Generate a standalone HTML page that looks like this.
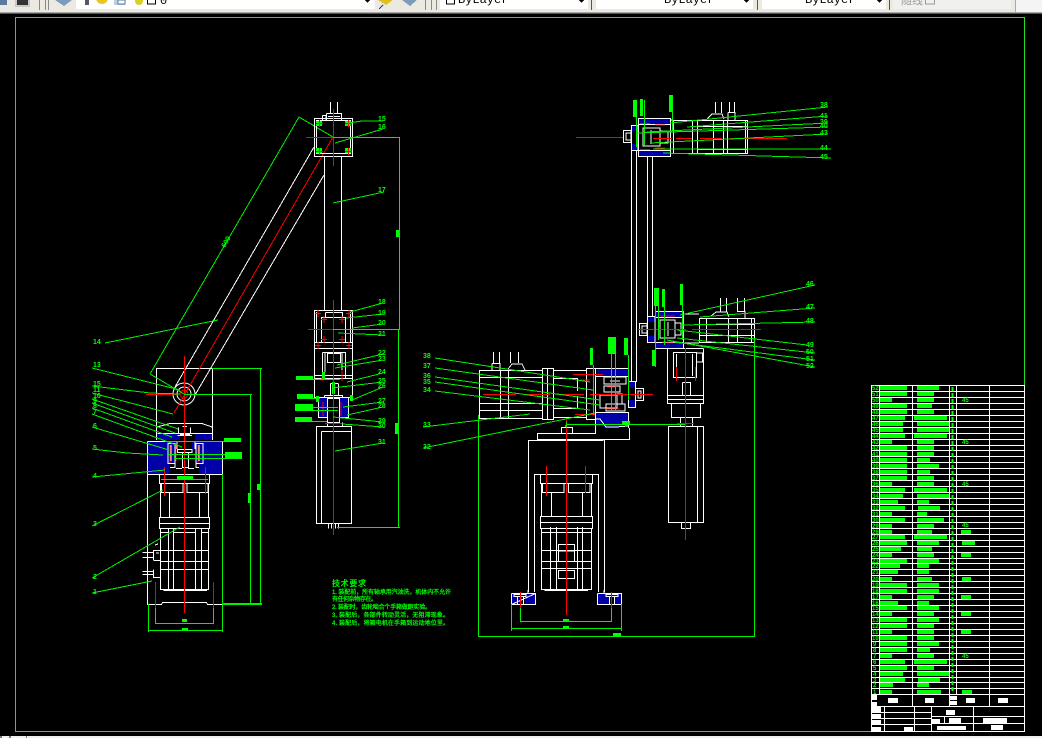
<!DOCTYPE html>
<html lang="zh">
<head>
<meta charset="utf-8">
<title>CAD</title>
<style>
html,body{margin:0;padding:0;background:#000;width:1042px;height:738px;overflow:hidden}
svg{position:absolute;left:0;top:0;display:block}
.w{fill:none;stroke:#fff;stroke-width:1}
.g{fill:none;stroke:#00f000;stroke-width:1}
.r{fill:none;stroke:#ff0000;stroke-width:1}
.b{fill:#00ff00;stroke:none}
.l{fill:#00ff00;font:bold 7px "Liberation Sans",sans-serif}
.n{fill:#00ff00;font:bold 6px "Liberation Sans",sans-serif}
.c{fill:#00ff00;stroke:#00ff00;stroke-width:.25;font-family:"Liberation Sans","Noto Sans CJK SC",sans-serif;font-size:6px}
.m{font:12px "Liberation Mono",monospace;fill:#000}
</style>
</head>
<body>
<svg width="1042" height="738" viewBox="0 0 1042 738" shape-rendering="crispEdges" xmlns="http://www.w3.org/2000/svg">
<rect width="1042" height="738" fill="#000"/>
<!-- toolbar -->
<rect width="1042" height="12" fill="#ece9e0"/>
<rect y="12" width="1042" height="1" fill="#a8a8a8"/>
<rect y="13" width="1042" height="1" fill="#555"/>
<rect x="0" y="0" width="7" height="5" fill="#5a7aa0"/>
<rect x="15" y="0" width="15" height="7" fill="#c8c8c8"/><rect x="17" y="0" width="11" height="5" fill="#333"/>
<rect x="39" y="0" width="1" height="10" fill="#888"/><rect x="45" y="0" width="1" height="10" fill="#888"/><rect x="48" y="0" width="1" height="10" fill="#888"/>
<path d="M55 0H72L64 6Z" fill="#7d9cbd"/>
<rect x="76" y="0" width="299" height="9" fill="#fff"/>
<rect x="85" y="0" width="4" height="5" fill="#556"/>
<circle cx="102" cy="-2" r="6" fill="#e8c820" shape-rendering="auto"/>
<rect x="114" y="0" width="11" height="5" fill="#b8d0e8"/><rect x="118" y="0" width="7" height="4" fill="#fff" stroke="#5a7aa0"/>
<circle cx="139" cy="1" r="4" fill="#d8d020" shape-rendering="auto"/>
<rect x="147.500" y="-2" width="8" height="6" fill="#fff" stroke="#000"/>
<text x="160" y="4" class="m">0</text>
<path d="M365 0H370L367.500 3Z" fill="#000"/>
<path d="M378 0H393L386 5Z" fill="#e0c020"/><path d="M379 9L383 5" stroke="#1840a0" fill="none"/>
<path d="M402 0H417L410 6Z" fill="#7d9cbd"/>
<rect x="425" y="0" width="1" height="10" fill="#888"/><rect x="431" y="0" width="1" height="10" fill="#888"/><rect x="436" y="0" width="1" height="10" fill="#888"/>
<rect x="440" y="0" width="148" height="9" fill="#fff"/>
<rect x="446.500" y="-2" width="8" height="6" fill="#fff" stroke="#000"/>
<text x="458" y="3" class="m">ByLayer</text>
<path d="M579 0H584L581.500 3Z" fill="#000"/>
<rect x="591" y="0" width="1" height="10" fill="#555"/>
<rect x="596" y="0" width="157" height="9" fill="#fff"/>
<text x="664" y="3" class="m">ByLayer</text>
<path d="M744 0H749L746.500 3Z" fill="#000"/>
<rect x="757" y="0" width="1" height="10" fill="#555"/>
<rect x="762" y="0" width="124" height="9" fill="#fff"/>
<text x="805" y="3" class="m">ByLayer</text>
<path d="M877 0H882L879.500 3Z" fill="#000"/>
<rect x="889" y="0" width="1" height="10" fill="#555"/>
<rect x="893" y="0" width="118" height="9" fill="#f0f0f0"/>
<text x="901" y="4" font-size="11" fill="#999" font-family="'Liberation Sans','Noto Sans CJK SC',sans-serif">随线</text>
<rect x="925.500" y="-2" width="9" height="6" fill="none" stroke="#999"/>
<rect x="1015" y="0" width="1" height="12" fill="#a8a8a8"/>
<rect x="1016" y="0" width="26" height="12" fill="#f4f4f4"/>
<!-- bottom strip -->
<rect x="0" y="736" width="1042" height="2" fill="#f0f0f0"/>
<rect x="0" y="736" width="2" height="2" fill="#777"/><rect x="9" y="736" width="2" height="2" fill="#777"/><rect x="26" y="736" width="1" height="2" fill="#777"/>
<!-- frame -->
<path d="M15.500 17.500H1024.500V731.500H15.500Z" fill="none" stroke="#20e020"/>

<!-- ================ hatching ================ -->
<g fill="#0000a8">
<rect x="147" y="441" width="22" height="33"/><rect x="169" y="441" width="8" height="8"/>
<rect x="199" y="441" width="23" height="33"/><rect x="192" y="441" width="8" height="8"/>
<rect x="157" y="433" width="23" height="7"/><rect x="195" y="433" width="17" height="7"/>
<rect x="168" y="443" width="8" height="21"/><rect x="196" y="443" width="8" height="21"/>
<rect x="318" y="397" width="9" height="20"/><rect x="339" y="397" width="9" height="20"/>
<rect x="638" y="118" width="32" height="6"/><rect x="638" y="150" width="32" height="6"/>
<rect x="631" y="125" width="7" height="6"/><rect x="631" y="144" width="7" height="6"/>
<rect x="655" y="311" width="28" height="6"/><rect x="655" y="343" width="28" height="5"/>
<rect x="647" y="316" width="8" height="6"/><rect x="647" y="336" width="8" height="6"/>
<rect x="597" y="369" width="31" height="7"/>
<path d="M596 412H628V426L616 428H606L596 423Z"/>
<rect x="628" y="381" width="7" height="7"/><rect x="628" y="400" width="7" height="7"/>
<rect x="512" y="594" width="10" height="10"/><rect x="525" y="594" width="10" height="10"/>
<rect x="598" y="594" width="12" height="10"/><rect x="614" y="594" width="7" height="10"/>
</g>

<!-- ================ LEFT VIEW white ================ -->
<g class="w">
<path d="M156.500 440V368.500H212.500V440"/>
<path d="M157 427L170 423.500H202L212 427"/>
<path d="M147.500 441.500V604.500H161.500L162.500 602.500H206.500L207.500 604.500H222.500V441.500H195V449M147.500 441.500H177V449"/>
<path d="M147.500 474.500H222.500"/>
<path d="M157.500 433.500H212.500"/>
<path d="M159.500 474.500V483.500H209.500V474.500"/>
<path d="M160.500 483.500V517.500M208.500 483.500V517.500"/>
<path d="M161.500 483.500V492.500H183V483.500M187 483.500V492.500H208V483.500"/>
<path d="M169.500 492.500V517.500M199.500 492.500V517.500"/>
<path d="M159.500 517.500H209.500V528.500H159.500ZM159.500 523.500H209.500"/>
<path d="M160.500 528.500V589.500H208.500V528.500"/>
<path d="M168.500 528.500V589.500M173.500 528.500V589.500M195.500 528.500V589.500M201.500 528.500V589.500"/>
<path d="M160.500 550.500H208.500M160.500 561.500H208.500M160.500 569.500H208.500M160.500 532.500H168M173 532.500H195M201 532.500H208"/>
<path d="M163.500 590.500H207"/>
<path d="M142.500 552.500H153.500M142.500 557.500H153.500M153.500 550.500H160M153.500 560.500H160M153.500 550V560M155 545L158 544M156 553H159"/>
<path d="M142.500 571.500H153.500M142.500 574.500H153.500M153.500 569.500V577.500H160"/>
<path d="M178.500 427.500V434M190.500 427.500V434M182.500 426.500H187M180 434.500H190"/>
<path d="M177.500 435.500H192"/>
<path d="M168 443.500H175V463.500H168ZM171 445V461"/>
<path d="M196 443.500H203V463.500H196ZM199 445V461"/>
<path d="M177.500 449.500H192V452.500H177.500Z"/>
<path d="M182.500 452.500V467.500H188.500V452.500M175 463.500V467.500H172M196 463.500V467.500H199"/>
<path d="M170 467.500H174M176 468.500H182M188 468.500H194"/>
<circle cx="184" cy="394" r="11" shape-rendering="auto"/>
<circle cx="184" cy="394" r="7" shape-rendering="auto"/>
<path d="M175 387L314 147M195 395L324 175"/>
</g>
<!-- left view red -->
<g class="r">
<path d="M184.500 356V613M146 394.500H177M155.500 582V608M213.500 582V608M164.500 467V496M205.500 467V494M174 413L333 137"/>
<path d="M170 445V463M198 445V463M176 444V461" />
</g>
<circle cx="184" cy="394" r="4" fill="none" stroke="#f00" shape-rendering="auto"/>
<!-- left view green -->
<g class="g">
<path d="M212 368.500H262M260.500 368V604M222 604.500H262M222 603.500H262"/>
<path d="M184 394.500H252M250.500 394V604"/>
<path d="M222.500 474V632M148.500 604V632M148 630.500H222"/>
<path d="M155.500 608V624M213.500 608V624M155 623.500H214"/>
<path d="M105 343L218 320M150 374L299 117L333 137M150 374L184 394"/>
<path d="M92 368L180 390M92 386L150 393L180 394M92 393L173 414M92 399L178 429M92 403L175 433M92 408L172 437M92 414L182 447M92 427L169 450M92 449L127 453L163 455M92 477L165 470M92 526L163 490M92 578L180 527M92 593L152 581"/>
<path d="M165 441.500H240M167 454.500H242M174 458.500H242M161 479.500H208"/>
</g>
<g class="b">
<rect x="224" y="438" width="17" height="4"/><rect x="225" y="452" width="17" height="6"/><rect x="177" y="476" width="16" height="3"/>
<rect x="182" y="619" width="5" height="3"/><rect x="182" y="628" width="6" height="2"/>
<rect x="248" y="493" width="3" height="10"/><rect x="257" y="484" width="3" height="6"/>
</g>
<text class="l" transform="translate(225,248) rotate(-60)" font-size="6">600</text>
<g class="l">
<text x="93" y="344">14</text><text x="93" y="367">13</text><text x="93" y="386">15</text><text x="93" y="392">11</text><text x="93" y="398">10</text><text x="93" y="403">9</text><text x="93" y="408">8</text><text x="93" y="414">7</text><text x="93" y="428">6</text><text x="93" y="450">5</text><text x="93" y="478">4</text><text x="93" y="526">3</text><text x="93" y="579">2</text><text x="93" y="594">1</text>
</g>

<!-- ================ MIDDLE VIEW ================ -->
<g class="w">
<path d="M314.500 118.500H352.500V156.500H314.500ZM316.500 120.500H350.500V153.500H316.500Z"/>
<path d="M324.500 156V310M341.500 156V310"/>
<path d="M326.500 113.500H341.500V120M326.500 113.500V120M328 116.500H340"/>
<path d="M330.500 102V113M337.500 102V113M322.500 115.500H326V120M322.500 115.500V120"/>
<path d="M314.500 310.500H352.500V397.500H314.500Z"/>
<path d="M316.500 312V342M350.500 312V342"/>
<path d="M321.500 317.500H345.500V342.500H321.500Z"/>
<path d="M325.500 312.500H342.500V317M325.500 312.500V317"/>
<path d="M314.500 342.500H352.500M314.500 348.500H352.500"/>
<path d="M322.500 352.500H345.500V378M322.500 352.500V378M327.500 353.500H340.500V362.500H327.500Z"/>
<path d="M314.500 375.500H352.500M314.500 378.500H352.500M325 352.500V372M342 352.500V372"/>
<path d="M330.500 383.500V395M338.500 383.500V395M330.500 383.500H338"/>
<path d="M324.500 395.500H342.500V398M324.500 395.500V398"/>
<path d="M318.500 397.500V417.500H327.500V397.500M348.500 397.500V417.500H339.500V397.500"/>
<path d="M327.500 398.500H339.500M327.500 417.500V422.500H339.500V417.500"/>
<path d="M327.500 422.500V426M342.500 422.500V426"/>
<path d="M316.500 426.500H351.500V523.500H316.500ZM321.500 431.500H351.500M321.500 431.500V523"/>
<path d="M328.500 523V528.500M331.500 523V528.500M335.500 523V528.500M338.500 523V528.500"/>
</g>
<g class="b">
<rect x="316" y="121" width="6" height="5"/><rect x="345" y="121" width="6" height="5"/><rect x="316" y="148" width="6" height="5"/><rect x="345" y="148" width="6" height="5"/>
<rect x="322" y="372" width="3" height="7"/><rect x="350" y="395" width="3" height="6"/><rect x="316" y="396" width="3" height="6"/>
<rect x="332" y="382" width="3" height="12"/>
</g>
<g class="r">
<path d="M333.500 109V166M306 137.500H352M333.500 300V535M308 329.500H352M325 423.500H342"/>
<path d="M316 123.500H323M319.500 120V127M345 123.500H352M348.500 120V127M316 151.500H323M319.500 148V155M345 151.500H352M348.500 148V155"/>
<path d="M315 313.500H321M318 310V317M346 313.500H352M349 310V317M321 319.500H327M324 316V323M339 319.500H345M342 316V323M321 339.500H327M324 336V343M339 339.500H345M342 336V343M315 345.500H321M318 342V349M346 345.500H352M349 342V349"/>
<path d="M322 378V381M342 370V381M323 402V410M341 402V410M323 410V416M341 410V416"/>
</g>
<g class="g">
<path d="M333 137.500H400M399.500 137V329M398.500 329V527M333 329.500H400M337 527.500H400"/>
<path d="M383 121L362 121L348 123M383 129L335 143M384 192L333 203"/>
<path d="M383 303L350 312M383 314L346 318M383 324L352 328M383 335L338 333M383 354L337 365M383 360L335 368M383 373L347 382M383 382L332 388M383 387L352 400M383 402L343 407M383 407L347 415M383 422L333 417M383 427L342 424M383 443L335 451"/>
<path d="M296 379.500H340M297 398.500H320M295 407.500H338M295 410.500H338M295 421.500H327"/>
</g>
<g class="b">
<rect x="296" y="376" width="17" height="4"/><rect x="297" y="394" width="16" height="4"/><rect x="295" y="404" width="18" height="7"/><rect x="295" y="417" width="17" height="5"/>
<rect x="396" y="230" width="3" height="7"/><rect x="395" y="423" width="3" height="11"/>
</g>
<g class="l">
<text x="378" y="121">15</text><text x="378" y="129">16</text><text x="378" y="192">17</text><text x="378" y="304">18</text><text x="378" y="315">19</text><text x="378" y="325">20</text><text x="378" y="336">21</text><text x="378" y="355">22</text><text x="378" y="361">23</text><text x="378" y="374">24</text><text x="378" y="383">25</text><text x="378" y="388">26</text><text x="378" y="403">27</text><text x="378" y="408">28</text><text x="378" y="423">29</text><text x="378" y="428">30</text><text x="378" y="444">31</text>
</g>

<!-- notes -->
<text x="332" y="586" class="c" style="font-size:8px" textLength="34">技术要求</text>
<text x="332" y="594" class="c" textLength="119">1. 装配前，所有轴承用汽油洗，机体内不允许</text>
<text x="332" y="601" class="c" textLength="45">有任何杂物存在。</text>
<text x="332" y="609" class="c" textLength="99">2. 装配时，齿轮啮合个手箱做跑实验。</text>
<text x="332" y="617" class="c" textLength="117">3. 装配后，各部件转动灵活，无阻滞现象。</text>
<text x="332" y="625" class="c" textLength="117">4. 装配后，将箱电机在手箱到运动地位里。</text>

<!-- ================ RIGHT VIEW ================ -->
<g class="w">
<!-- top unit -->
<path d="M673.500 120.500H747.500V153.500H673.500Z"/>
<path d="M692.500 120V153M697.500 120V153M713.500 120V153M723.500 120V153M727.500 120V153M745.500 120V153"/>
<path d="M697 126.500H747M697 149.500H747"/>
<path d="M715.500 102V113M721.500 102V113M729.500 102V113M734.500 102V113"/>
<path d="M707 119L712 114H722L724 119M728 112.500H735V120M728 112.500V120"/>
<path d="M638.500 118.500H670.500V156.500H638.500ZM670.500 120H673"/>
<path d="M638.500 124.500H670.500M638.500 150.500H670.500M631.500 125.500H638V150.500H631.500ZM623.500 130.500H631V142.500H623.500ZM626 133H631V140H626Z"/>
<path d="M643 128H660V146H643ZM651 130V144M660 131H668V143H660"/>
<path d="M631.500 150V382M636.500 150V382M647.500 156V316M652.500 156V316"/>
<!-- lower right unit -->
<path d="M699.500 318.500H754.500V342.500H699.500Z"/>
<path d="M706.500 318V342M728.500 318V342M737.500 318V342M751.500 318V342M699 324.500H754M699 335.500H754"/>
<path d="M720.500 298V312M726.500 298V312M737.500 298V312M744.500 298V312"/>
<path d="M711 316L716 312H727L729 317M737 311.500H745V318"/>
<path d="M655.500 311.500H683.500V348.500H655.500ZM683.500 314H699M683.500 343H699"/>
<path d="M655.500 317.500H683.500M655.500 342.500H683.500M647.500 316.500H655V342.500H647.500ZM639.500 323.500H647V335.500H639.500ZM642 326H647V333H642Z"/>
<path d="M660 320H675V338H660ZM668 322V336M675 323H681V335H675"/>
<path d="M667.500 348.500V398M703.500 348.500V398M672.500 348.500H703.500"/>
<path d="M673.500 352.500H696.500V377.500H673.500ZM676.500 354V376M692.500 354V376M696.500 353H702.500V362H696.500"/>
<path d="M682.500 382.500H690.500V395.500M682.500 382.500V395.500M685.500 377V382"/>
<path d="M667.500 395.500H703.500V403.500H667.500ZM667.500 399.500H703.500"/>
<path d="M671.500 403.500V417.500H700.500V403.500"/>
<path d="M680.500 417.500V426M692.500 417.500V426"/>
<path d="M668.500 426.500H703.500V522.500H668.500ZM697.500 426.500V522.500"/>
<path d="M681.500 522V528.500H690.500V522M685.500 522V528"/>
<!-- left motor -->
<path d="M479.500 370.500H542.500V418.500H479.500Z"/>
<path d="M500.500 370V418M508.500 370V418M542.500 368.500H553.500V419.500H542.500ZM547.500 368.500V419.500"/>
<path d="M479 377.500H542M479 403.500H542M479 410.500H542"/>
<path d="M553.500 370.500H586.500M553.500 417.500H586.500M553.500 378.500H577M553.500 408.500H577M577.500 378V391M577.500 396V408"/>
<path d="M586.500 368.500H595.500V419.500H586.500Z"/>
<path d="M595.500 368.500H628.500V376.500H595.500Z"/>
<path d="M595 412.500H628.500V428M595 419H600L606 427H616L628 426"/>
<path d="M604 377H626V384H604ZM610 381H620M604 386H620V392H604Z"/>
<path d="M600 395H617V408H600ZM606 404H625V411H606ZM617 394H622V404H617Z"/>
<path d="M628.500 381.500H635.500V407.500H628.500ZM635.500 388.500H643.500V400.500H635.500ZM638 391H641V398H638Z"/>
<path d="M493.500 352V363M499.500 352V363M510.500 352V363M518.500 352V363"/>
<path d="M492 363.500H500V370M492 363.500V370M508 369L512 364H522L525 370"/>
<!-- base -->
<path d="M595.500 419V433.500H537.500V439.500H629.500V428"/>
<path d="M561.500 433V427.500H572.500V433M566 425L566 427"/>
<path d="M528.500 440.500H603.500M528.500 440V592M604.500 440V592"/>
<path d="M534.500 474.500H598.500M534.500 474V592M598.500 474V592"/>
<path d="M540.500 474.500V483.500H592.500V474.500"/>
<path d="M542.500 483.500H564V492.500H542.500ZM568.500 483.500H590V492.500H568.500Z"/>
<path d="M541.500 483V517M591.500 483V517M551.500 492V516M582.500 492V516"/>
<path d="M540.500 516.500H592.500V528.500H540.500ZM540.500 522.500H592.500"/>
<path d="M541.500 528V589.500H591.500V528"/>
<path d="M550.500 527V589M556.500 527V589M577.500 527V589M582.500 527V589"/>
<path d="M541.500 532.500H591M541.500 550.500H591M541.500 561.500H591M541.500 568.500H591"/>
<path d="M558.500 544.500H574.500V561.500H558.500ZM558.500 551H574.500M558.500 570.500H574.500V578.500H558.500Z"/>
<path d="M544.500 590.500H588"/>
<path d="M511.500 593.500H528V590M535.500 593.500V604.500H511.500ZM511.500 593.500V604.500M528 593.500H535.500M514 594.500H526V596.500H514ZM517.500 596V604M523.500 596V604"/>
<path d="M597.500 593.500V604.500H621.500V593.500H604V590M597.500 593.500H604M606 594.500H618V596.500H606ZM609.500 596V604M614.500 596V604"/>
</g>
<!-- right view red -->
<g class="r">
<path d="M576 137.500H623M653 138.500H672M676 138.500H692M700 138.500H722M730 138.500H787"/>
<path d="M692 329.500H761M638 329.500H686"/>
<path d="M685.500 348V540M676.500 367V381M695.500 367V381M677 423.500H694"/>
<path d="M566.500 420V615M546.500 466V496M585.500 466V493M520.500 592V608M611.500 592V608"/>
<path d="M483 394.500H516M526 394.500H550M557 394.500H584M590 394.500H653M573 374.500H603M575 414.500H595"/>
<path d="M640 123.500H650M655 125H665M640 149.500H650M655 148H665M660 316H675M662 342H676M580 380H590M607 387H615M605 409H620"/>
</g>
<!-- right view green -->
<g class="g">
<path d="M828 107L670 123M828 116L687 127M828 123L647 132M828 127L637 133M828 134L650 143M831 149L653 149M831 158L663 153"/>
<path d="M636.500 100V147M644.500 100V145M672.500 95V130"/>
<path d="M815 285L680 315M815 308L700 317M815 322L683 325M807 345L677 330M815 353L677 338M815 360L673 342M815 367L667 340"/>
<path d="M435 358L500 368L590 382M435 368L593 390M435 377L600 400M435 382L600 405M435 391L590 410"/>
<path d="M423 427L530 414M423 448L595 413"/>
<path d="M593.500 365V415M611.500 354V410M615.500 354V410M628.500 355V400M655.500 288V367M658.500 288V340M664.500 290V345M682.500 284V340"/>
<path d="M754.500 338V637M478.500 415V637M478 636.500H755"/>
<path d="M566 424.500H685M566.500 422V428"/>
<path d="M511.500 604V631M621.500 604V631M511 628.500H622M520.500 608V622M611.500 608V622M520 621.500H612"/>
</g>
<g class="b">
<rect x="633" y="100" width="4" height="17"/><rect x="640" y="99" width="3" height="17"/><rect x="669" y="95" width="3" height="17"/>
<rect x="590" y="348" width="3" height="17"/><rect x="608" y="337" width="8" height="17"/><rect x="624" y="338" width="4" height="17"/>
<rect x="654" y="288" width="5" height="18"/><rect x="662" y="289" width="3" height="18"/><rect x="680" y="284" width="3" height="21"/><rect x="652" y="350" width="3" height="16"/>
<rect x="622" y="421" width="8" height="4"/>
<rect x="563" y="619" width="6" height="2"/><rect x="563" y="626" width="6" height="3"/><rect x="613" y="633" width="8" height="3"/>
</g>
<g class="l">
<text x="820" y="107">38</text><text x="820" y="118">41</text><text x="820" y="124">39</text><text x="820" y="128">40</text><text x="820" y="135">43</text><text x="820" y="150">44</text><text x="820" y="159">45</text>
<text x="806" y="286">46</text><text x="806" y="309">47</text><text x="806" y="323">48</text><text x="806" y="347">49</text><text x="806" y="354">50</text><text x="806" y="361">51</text><text x="806" y="368">52</text>
<text x="423" y="358">38</text><text x="423" y="368">37</text><text x="423" y="378">36</text><text x="423" y="384">35</text><text x="423" y="392">34</text><text x="423" y="427">33</text><text x="423" y="449">32</text>
</g>

<!-- ================ TABLE ================ -->
<g class="w">
<path d="M871.500 385V731.500M879.500 385V694M912.500 385V706M949.500 385V706M956.500 385V694M989.500 385V706M1024.500 385V731.500"/>
<path d="M871 385.500H1025M871 391.500H1025M871 397.500H1025M871 403.500H1025M871 409.500H1025M871 415.500H1025M871 421.500H1025M871 427.500H1025M871 433.500H1025M871 439.500H1025M871 445.500H1025M871 450.500H1025M871 456.500H1025M871 462.500H1025M871 468.500H1025M871 474.500H1025M871 480.500H1025M871 486.500H1025M871 492.500H1025M871 498.500H1025M871 504.500H1025M871 510.500H1025M871 516.500H1025M871 522.500H1025M871 528.500H1025M871 534.500H1025M871 540.500H1025M871 546.500H1025M871 552.500H1025M871 558.500H1025M871 563.500H1025M871 569.500H1025M871 575.500H1025M871 581.500H1025M871 587.500H1025M871 593.500H1025M871 599.500H1025M871 605.500H1025M871 611.500H1025M871 617.500H1025M871 623.500H1025M871 629.500H1025M871 635.500H1025M871 641.500H1025M871 647.500H1025M871 653.500H1025M871 659.500H1025M871 665.500H1025M871 671.500H1025M871 677.500H1025M871 682.500H1025M871 688.500H1025M871 694.500H1025M871 706.500H1025M871 731.500H1025"/>
<path d="M884.500 706V731M914.500 706V731M931.500 706V731M973.500 706V731"/>
<path d="M871 712.500H931M871 718.500H931M871 724.500H931M931 716.500H1025M931 723.500H1025M944.500 716V723"/>
</g>
<g fill="#fff">
<rect x="888" y="698" width="10" height="5"/><rect x="925" y="698" width="9" height="5"/><rect x="966" y="698" width="9" height="5"/><rect x="998" y="698" width="10" height="5"/>
<rect x="872" y="695" width="5" height="5"/><rect x="872" y="702" width="5" height="4"/>
<rect x="950" y="696" width="7" height="4"/><rect x="950" y="701" width="7" height="4"/>
<rect x="872" y="707" width="9" height="5"/><rect x="872" y="714" width="9" height="4"/><rect x="872" y="720" width="9" height="5"/><rect x="872" y="727" width="9" height="4"/>
<rect x="904" y="727" width="9" height="4"/><rect x="946" y="710" width="9" height="5"/><rect x="932" y="719" width="8" height="4"/><rect x="949" y="718" width="12" height="5"/><rect x="983" y="718" width="24" height="5"/><rect x="937" y="726" width="29" height="4"/><rect x="991" y="725" width="12" height="5"/>
</g>
<!-- table bars -->
<path fill="none" stroke="#00ff00" stroke-width="4" d="
M880 388H907M917 388H939M880 394H907M917 394H934M880 400H892M917 400H934M880 406H907M917 406H932M880 412H907M917 412H934
M880 418H905M914 418H947M880 424H903M917 424H949M880 430H903M917 430H949M880 436H905M914 436H947M880 442H892M917 442H934
M880 448H907M917 448H934M880 454H907M917 454H934M880 460H907M917 460H930M880 466H907M917 466H939M880 472H907M917 472H930
M880 478H907M917 478H934M880 484H892M917 484H934M880 490H905M914 490H947M880 496H903M917 496H949M917 502H929
M880 508H905M918 508H940M880 514H892M917 514H927M880 520H905M917 520H944M880 526H892M917 526H934M880 532H892M917 532H932M961 532H971
M880 537H905M914 537H947M880 543H907M917 543H939M917 549H932M880 555H892M917 555H934M961 555H971M880 561H907M917 561H939
M917 566H929M917 572H929M880 579H892M917 579H932M962 579H971M880 585H907M917 585H939M880 591H907M917 591H939
M880 597H892M917 597H934M961 597H971M917 603H929M880 608H907M917 608H939M880 614H892M917 614H934M961 614H971
M880 620H907M917 620H939M880 626H907M917 626H934M880 632H892M917 632H934M961 632H971M880 638H907M917 638H934
M880 644H907M917 644H939M880 650H907M917 650H930M880 656H892M917 656H934M880 662H905M914 662H947
M880 668H907M917 668H934M880 674H903M917 674H949M880 680H905M918 680H940M880 685H893M917 685H929M880 692H892M917 692H941M962 692H972"/>
<g class="b">
<rect x="880" y="500" width="18" height="4"/><rect x="880" y="547" width="21" height="4"/><rect x="880" y="564" width="20" height="4"/><rect x="880" y="570" width="18" height="4"/><rect x="880" y="601" width="18" height="4"/>
<rect x="962" y="541" width="13" height="4"/>
</g>
<g class="n">
<text x="962" y="402">45</text><text x="962" y="444">45</text><text x="962" y="486">45</text><text x="962" y="527">45</text><text x="962" y="658">45</text>
<text x="872" y="390">52</text><text x="872" y="396">51</text><text x="872" y="402">50</text><text x="872" y="408">49</text><text x="872" y="414">48</text><text x="872" y="420">47</text><text x="872" y="426">46</text><text x="872" y="432">45</text><text x="872" y="438">44</text><text x="872" y="444">43</text><text x="872" y="450">42</text><text x="872" y="456">41</text><text x="872" y="462">40</text><text x="872" y="468">39</text><text x="872" y="474">38</text><text x="872" y="480">37</text><text x="872" y="486">36</text><text x="872" y="492">35</text><text x="872" y="498">34</text><text x="872" y="504">33</text><text x="872" y="510">32</text><text x="872" y="516">31</text><text x="872" y="522">30</text><text x="872" y="528">29</text><text x="872" y="534">28</text><text x="872" y="539">27</text><text x="872" y="545">26</text><text x="872" y="551">25</text><text x="872" y="557">24</text><text x="872" y="563">23</text><text x="872" y="568">22</text><text x="872" y="574">21</text><text x="872" y="581">20</text><text x="872" y="587">19</text><text x="872" y="593">18</text><text x="872" y="599">17</text><text x="872" y="605">16</text><text x="872" y="610">15</text><text x="872" y="616">14</text><text x="872" y="622">13</text><text x="872" y="628">12</text><text x="872" y="634">11</text><text x="872" y="640">10</text><text x="873" y="646">9</text><text x="873" y="652">8</text><text x="873" y="658">7</text><text x="873" y="664">6</text><text x="873" y="670">5</text><text x="873" y="676">4</text><text x="873" y="682">3</text><text x="873" y="687">2</text><text x="873" y="694">1</text>
</g>
<path d="M952.500 387V691" fill="none" stroke="#00ff00" stroke-width="2" stroke-dasharray="4 2"/>
</svg>
</body>
</html>
